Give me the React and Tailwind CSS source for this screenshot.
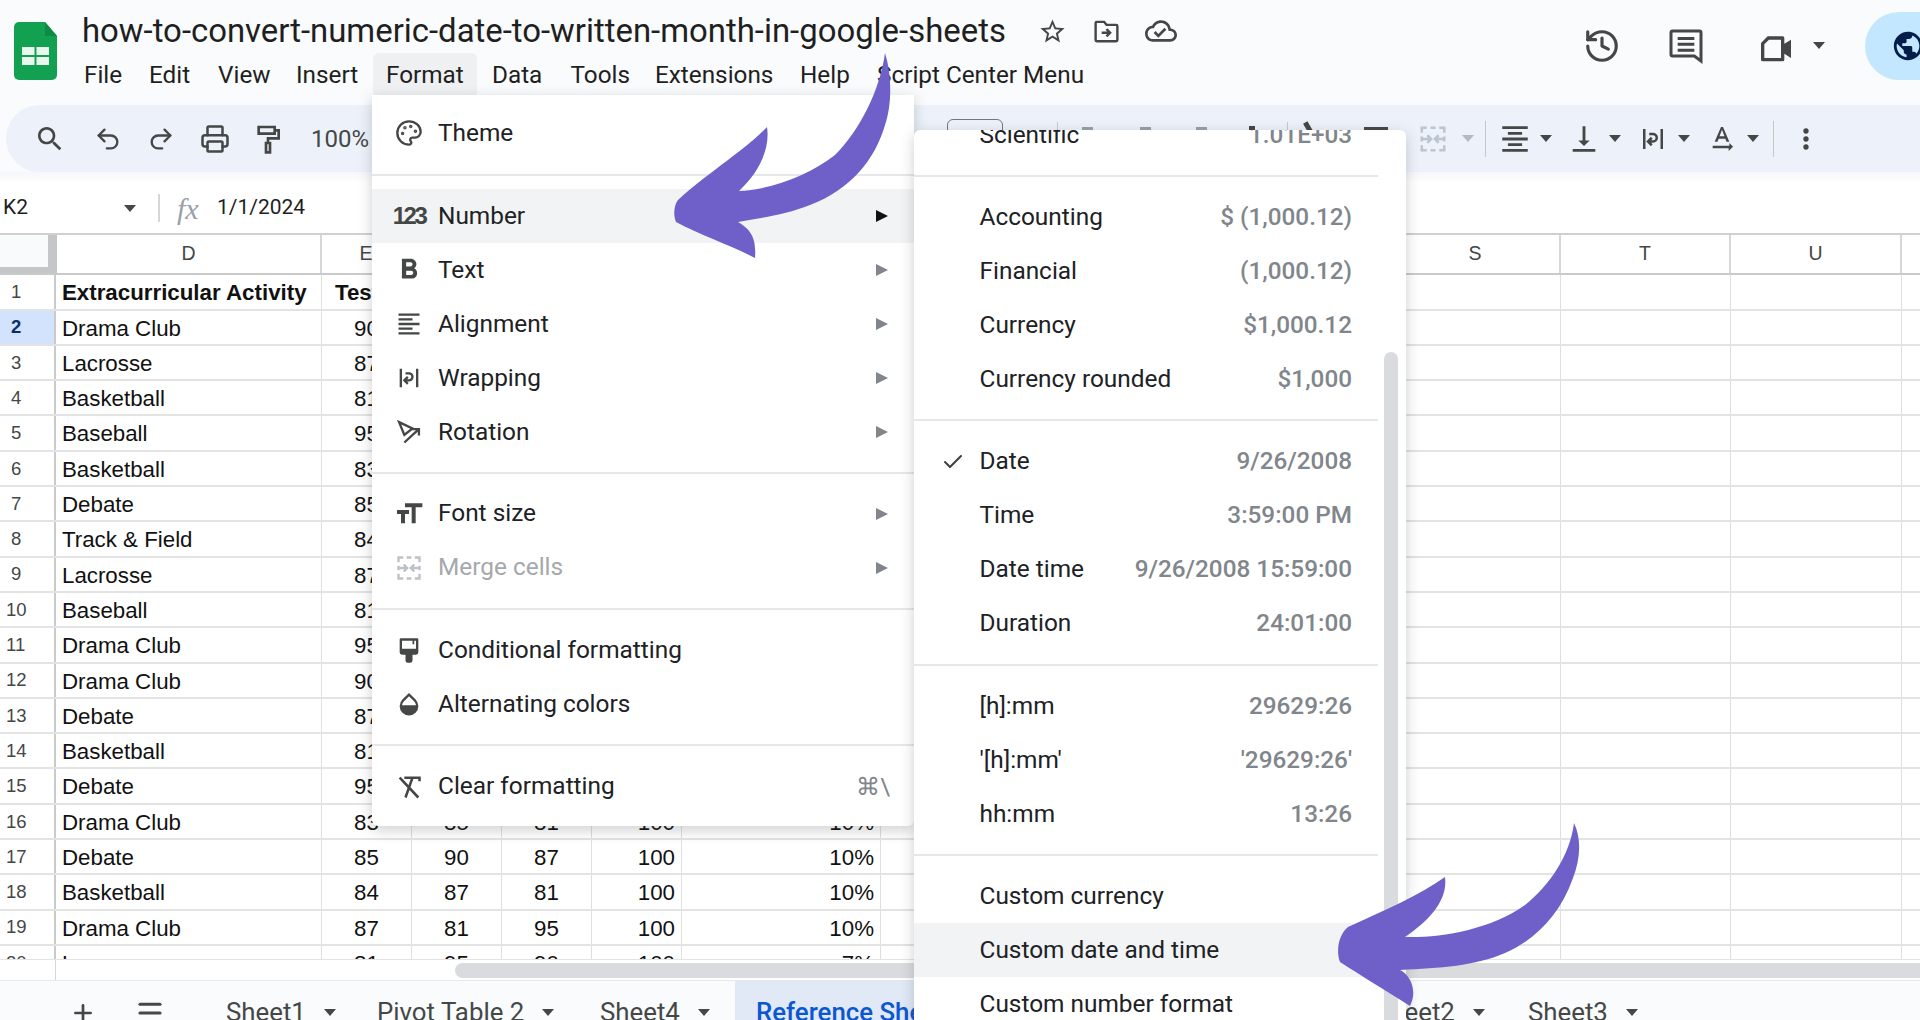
import { Check, History, Menu, Palette, Plus, Printer, Redo2, Undo2 } from "lucide-react";

const rows = [
  ["Drama Club", "90"], ["Lacrosse", "87"], ["Basketball", "81"], ["Baseball", "95"], ["Basketball", "83"],
  ["Debate", "85"], ["Track & Field", "84"], ["Lacrosse", "87"], ["Baseball", "81"], ["Drama Club", "95"],
  ["Drama Club", "90"], ["Debate", "87"], ["Basketball", "81"], ["Debate", "95"], ["Drama Club", "83", "85", "81", "100", "10%"],
  ["Debate", "85", "90", "87", "100", "10%"], ["Basketball", "84", "87", "81", "100", "10%"],
  ["Drama Club", "87", "81", "95", "100", "10%"], ["Lacrosse", "81", "95", "90", "100", "7%"],
];

const menuLinks = [
  ["File", "w-[65px]"], ["Edit", "w-[69px]"], ["View", "w-[78px]"], ["Insert", "w-[91px]"],
];
const menuLinksAfter = [
  ["Data", "w-[78.5px]"], ["Tools", "w-[84.5px]"], ["Extensions", "w-[145px]"], ["Help", "w-[77px]"], ["Script Center Menu", ""],
];

function Mat({ d, size = 28, color = "#444746" }) {
  return (
    <svg width={size} height={size} viewBox="0 0 24 24" fill={color}>
      <path d={d} />
    </svg>
  );
}

function Line({ d, size = 28, color = "#444746", width = 2 }) {
  return (
    <svg width={size} height={size} viewBox="0 0 24 24" fill="none" stroke={color} strokeWidth={width}>
      <path d={d} />
    </svg>
  );
}

const MERGE = "M3 7V3h4M17 3h4v4M3 17v4h4M17 21h4v-4M3 10v4M21 10v4M10 3h4M10 21h4M3 12h7M7.5 9l3 3-3 3M21 12h-7M16.5 9l-3 3 3 3";
const WRAP = "M5 4v16M19 4v16M9 8h3a3 3 0 0 1 0 6H8.5M11 11l-3 3 3 3";

function Caret({ color = "border-t-[#444746]" }) {
  return <span className={`block h-0 w-0 border-x-[6px] border-t-[7px] border-x-transparent ${color}`} />;
}

function Slot({ w, children }) {
  return <div className={`flex shrink-0 items-center justify-center ${w}`}>{children}</div>;
}

function ToolDrop({ children }) {
  return (
    <div className="mr-[7px] flex shrink-0 items-center">
      <Slot w="w-[44px]">{children}</Slot>
      <Slot w="w-[18px]"><Caret /></Slot>
    </div>
  );
}

function Divider({ h = "h-[28.5px]" }) {
  return (
    <div className={`flex items-center ${h}`}>
      <div className="h-[2px] w-full bg-[#e6e7e8]" />
    </div>
  );
}

function MainItem({ icon, label, arrow, active, disabled, hint }) {
  return (
    <div className={`flex h-[54px] items-center ${active ? "bg-[#f1f3f4]" : ""}`}>
      <div className="flex w-[66px] justify-center pl-[8px] text-[#444746]">{icon}</div>
      <span className={`text-[24.4px] ${disabled ? "text-[#a5a8ab]" : "text-[#202124]"}`}>{label}</span>
      {arrow && (
        <span className={`ml-auto mr-[26px] h-0 w-0 border-y-[6px] border-l-[12px] border-y-transparent ${active ? "border-l-[#111111]" : "border-l-[#80868b]"}`} />
      )}
      {hint && <span className="ml-auto mr-[24px] text-[24px] text-[#80868b]">{hint}</span>}
    </div>
  );
}

function FormatItem({ label, value, checked, active }) {
  return (
    <div className={`flex h-[54px] items-center pl-[65.5px] pr-[54px] ${active ? "bg-[#f1f3f4]" : ""}`}>
      {checked && (
        <span className="-ml-[39px] mr-[15px] text-[#3c4043]">
          <Check size={24} strokeWidth={2} />
        </span>
      )}
      <span className="text-[24.4px] text-[#202124]">{label}</span>
      {value && <span className="ml-auto text-[24.3px] font-medium text-[#80868b]">{value}</span>}
    </div>
  );
}

function SubDivider() {
  return (
    <div className="mr-[28px]">
      <Divider h="h-[28.3px]" />
    </div>
  );
}

function ColHead({ w, children }) {
  return (
    <div className={`flex shrink-0 items-center justify-center border-r-2 border-[#d5d6d6] text-[19.5px] text-[#444746] ${w}`}>
      {children}
    </div>
  );
}

function Cell({ w, align = "justify-center", bold, children }) {
  return (
    <div className={`flex shrink-0 items-center overflow-hidden whitespace-nowrap border-r border-[#dedfdf] pt-[2px] text-[22.3px] text-[#111111] ${w} ${align} ${bold ? "font-bold" : ""}`}>
      {children}
    </div>
  );
}

function SheetTab({ name, w }) {
  return (
    <div className={`flex shrink-0 items-center ${w}`}>
      <span className="text-[25.8px] text-[#444746]">{name}</span>
      <span className="ml-[18px]"><Caret /></span>
    </div>
  );
}

export default function App() {
  return (
    <div className="relative flex h-[1020px] w-[1920px] flex-col overflow-hidden bg-white font-['Roboto',sans-serif]">
      {/* ---- title bar ---- */}
      <div className="flex h-[105px] shrink-0 bg-[#f9fbfd]">
        <div className="ml-[14px] mt-[22px] shrink-0">
          <svg width="43" height="58" viewBox="0 0 43 58">
            <path d="M5 0h26l12 14v39a5 5 0 0 1-5 5H5a5 5 0 0 1-5-5V5a5 5 0 0 1 5-5z" fill="#12a150" />
            <path d="M31 0l12 14H31z" fill="#0d8a43" />
            <path d="M8 25h27v18H8z" fill="#e8f7ee" />
            <path d="M20.5 25h2v18h-2zM8 33h27v2H8z" fill="#12a150" />
          </svg>
        </div>
        <div className="ml-[25px] flex shrink-0 flex-col">
          <div className="mt-[10px] flex h-[42px] items-center">
            <span className="text-[32.9px] leading-none text-[#1f1f1f]">how-to-convert-numeric-date-to-written-month-in-google-sheets</span>
            <span className="ml-[32px]"><Mat size={29} d="M22 9.24l-7.19-.62L12 2 9.19 8.63 2 9.24l5.46 4.73L5.82 21 12 17.27 18.18 21l-1.63-7.03L22 9.24zM12 15.4l-3.76 2.27 1-4.28-3.32-2.88 4.38-.38L12 6.1l1.71 4.04 4.38.38-3.32 2.88 1 4.28L12 15.4z" /></span>
            <span className="ml-[25px]"><Line size={29} d="M4 4h6l2 2.5h8a1 1 0 0 1 1 1V19a1 1 0 0 1-1 1H4a1 1 0 0 1-1-1V5a1 1 0 0 1 1-1zM8 13h7M12 10l3 3-3 3" /></span>
            <span className="ml-[24px]"><Mat size={32} d="M19.35 10.04C18.67 6.59 15.64 4 12 4 9.11 4 6.6 5.64 5.35 8.04 2.34 8.36 0 10.91 0 14c0 3.31 2.69 6 6 6h13c2.76 0 5-2.24 5-5 0-2.64-2.05-4.78-4.65-4.96zM19 18H6c-2.21 0-4-1.79-4-4 0-2.05 1.53-3.76 3.56-3.97l1.07-.11.5-.95C8.08 7.14 9.94 6 12 6c2.62 0 4.88 1.86 5.39 4.43l.3 1.5 1.53.11c1.56.1 2.78 1.41 2.78 2.96 0 1.65-1.35 3-3 3zm-9-3.82l-2.09-2.09L6.5 13.5 10 17l6.01-6.01-1.41-1.41z" /></span>
          </div>
          <div className="mt-[1px] flex h-[42px] items-center pl-[2px] pt-[2px] text-[24.3px] text-[#1f1f1f]">
            {menuLinks.map(([name, w]) => (
              <span key={name} className={`shrink-0 whitespace-nowrap ${w}`}>{name}</span>
            ))}
            <span className="-ml-[14px] -mt-[2px] mr-[15px] flex h-[42px] w-[104px] shrink-0 items-center rounded-t-md bg-[#eef0f2] pl-[13px] pt-[2px]">Format</span>
            {menuLinksAfter.map(([name, w]) => (
              <span key={name} className={`shrink-0 whitespace-nowrap ${w}`}>{name}</span>
            ))}
          </div>
        </div>
        <div className="ml-auto flex h-[92px] items-center">
          <span><History size={38} strokeWidth={2} color="#444746" /></span>
          <span className="ml-[45px]"><Line size={40} width={1.8} d="M4 3h16a1 1 0 0 1 1 1v17l-4-3H4a1 1 0 0 1-1-1V4a1 1 0 0 1 1-1zM7 7.5h10M7 11h10M7 14.5h10" /></span>
          <span className="ml-[50px] mt-[4px]"><Mat size={40} d="M7 5h9a1 1 0 0 1 1 1v3.5L21 7v11l-4-2.5V19a1 1 0 0 1-1 1H4a1 1 0 0 1-1-1V9zm.8 2L5 9.8V18h10V7z" /></span>
          <span className="ml-[17px] flex -mt-[2px]"><Caret /></span>
          <div className="ml-[40px] flex h-[68px] w-[55px] items-center rounded-l-[34px] bg-[#c2e7ff] pl-[26px]">
            <span className="shrink-0"><Mat size={34} color="#041e49" d="M12 2C6.48 2 2 6.48 2 12s4.48 10 10 10 10-4.48 10-10S17.52 2 12 2zm-1 17.93c-3.95-.49-7-3.85-7-7.93 0-.62.08-1.21.21-1.79L9 15v1c0 1.1.9 2 2 2v1.93zm6.9-2.54c-.26-.81-1-1.39-1.9-1.39h-1v-3c0-.55-.45-1-1-1H8v-2h2c.55 0 1-.45 1-1V7h2c1.1 0 2-.9 2-2v-.41c2.93 1.19 5 4.06 5 7.41 0 2.08-.8 3.97-2.1 5.39z" /></span>
          </div>
        </div>
      </div>

      {/* ---- toolbar ---- */}
      <div className="h-[67px] shrink-0 bg-[#f9fbfd] pl-[6px]">
        <div className="flex h-[67px] items-center rounded-l-[34px] bg-[#edf2fa] pl-[15px]">
          <Slot w="w-[58px]"><Mat size={32} d="M15.5 14h-.79l-.28-.27C15.41 12.59 16 11.11 16 9.5 16 5.91 13.09 3 9.5 3S3 5.91 3 9.5 5.91 16 9.5 16c1.61 0 3.09-.59 4.23-1.57l.27.28v.79l5 4.99L20.49 19l-4.99-5zm-6 0C7.01 14 5 11.99 5 9.5S7.01 5 9.5 5 14 7.01 14 9.5 11.99 14 9.5 14z" /></Slot>
          <Slot w="w-[58px]"><Undo2 size={28} strokeWidth={2} color="#444746" /></Slot>
          <Slot w="w-[48px]"><Redo2 size={28} strokeWidth={2} color="#444746" /></Slot>
          <Slot w="w-[60px]"><Printer size={30} strokeWidth={2} color="#444746" /></Slot>
          <Slot w="w-[46px]"><Line size={32} d="M5 3h12v5H5zM17 5.5h3v6h-8v3.5M10.5 15h3v7h-3z" /></Slot>
          <span className="ml-[20px] w-[636px] shrink-0 text-[24px] text-[#444746]">100%</span>
          <div className="h-[39px] w-[56px] shrink-0 rounded-md border border-[#747775]" />
          <div className="ml-[54px] h-[34px] w-px shrink-0 bg-[#c7c7c7]" />
          <div className="ml-[24px] h-[23px] w-[11px] shrink-0 bg-[#9aa0a6]" />
          <div className="ml-[47px] h-[23px] w-[11px] shrink-0 bg-[#9aa0a6]" />
          <div className="ml-[45px] h-[23px] w-[11px] shrink-0 bg-[#9aa0a6]" />
          <div className="ml-[42px] h-[25px] w-[6px] shrink-0 bg-[#444746]" />
          <div className="ml-[32px] h-[34px] w-px shrink-0 bg-[#c7c7c7]" />
          <div className="ml-[24px] h-[37px] w-[5px] shrink-0 -rotate-30 bg-[#444746]" />
          <div className="ml-[47px] h-[23px] w-[24px] shrink-0 bg-[#444746]" />
          <Slot w="ml-[23px] w-[44px]"><Line size={30} color="#bdc4cf" d={MERGE} /></Slot>
          <Slot w="w-[26px]"><Caret color="border-t-[#b6bac0]" /></Slot>
          <Slot w="w-[8px]"><span className="h-[36px] w-px bg-[#c7c7c7]" /></Slot>
          <div className="ml-[4px]" />
          <ToolDrop><Mat size={34} d="M7 15v2h10v-2H7zm-4 6h18v-2H3v2zm0-8h18v-2H3v2zm4-6v2h10V7H7zM3 3v2h18V3H3z" /></ToolDrop>
          <ToolDrop><Mat size={34} d="M16 13h-3V3h-2v10H8l4 4 4-4zM4 19v2h16v-2H4z" /></ToolDrop>
          <ToolDrop><Line size={30} d={WRAP} /></ToolDrop>
          <div className="-mr-[7px]"><ToolDrop><Mat size={32} d="M12.75 3h-1.5L6.5 14h2.1l.9-2.2h5l.9 2.2h2.1L12.75 3zm-2.62 7L12 4.98 13.87 10h-3.74zm10.37 8l-3-3v2H5v2h12v2l3-3z" /></ToolDrop></div>
          <Slot w="w-[22px]"><span className="h-[36px] w-px bg-[#c7c7c7]" /></Slot>
          <Slot w="w-[44px]"><Mat size={32} d="M12 8a2 2 0 1 0 0-4 2 2 0 0 0 0 4zm0 2a2 2 0 1 0 0 4 2 2 0 0 0 0-4zm0 6a2 2 0 1 0 0 4 2 2 0 0 0 0-4z" /></Slot>
        </div>
      </div>

      {/* ---- formula bar ---- */}
      <div className="flex h-[61px] shrink-0 items-center bg-gradient-to-b from-[#f5f7fb] from-0% to-white to-[18%] pl-[3px] pt-[11px]">
        <span className="w-[121px] text-[21px] text-[#1f1f1f]">K2</span>
        <Caret />
        <span className="ml-[22px] h-[28px] w-[2px] bg-[#d5d7da]" />
        <span className="ml-[17px] w-[40px] font-['Liberation_Serif',serif] text-[30px] italic text-[#9aa0a6]">fx</span>
        <span className="text-[21px] text-[#1f1f1f]">1/1/2024</span>
      </div>

      {/* ---- grid ---- */}
      <div className="h-[726px] shrink-0 overflow-hidden border-t-2 border-[#cfd0d0] font-['Liberation_Sans',sans-serif]">
        <div className="flex h-[40px] border-b-2 border-[#c9caca]">
          <div className="h-[38px] w-[48px] shrink-0 border-b-[6px] border-[#c4c6c7] bg-[#f9fafb]" />
          <div className="h-[38px] w-[9px] shrink-0 bg-[#c4c6c7]" />
          <ColHead w="w-[265px]">D</ColHead>
          <ColHead w="w-[90px]">E</ColHead>
          <ColHead w="w-[90px]">F</ColHead>
          <ColHead w="w-[90px]">G</ColHead>
          <ColHead w="w-[90px]">H</ColHead>
          <ColHead w="w-[199px]">I</ColHead>
          <ColHead w="w-[510px]" />
          <ColHead w="w-[170px]">S</ColHead>
          <ColHead w="w-[170px]">T</ColHead>
          <ColHead w="w-[171px]">U</ColHead>
        </div>
        <div className="flex h-[35.6px] border-b-2 border-[#e3e3e3]">
          <div className="flex w-[56px] shrink-0 items-center border-r-2 border-[#c9caca] pl-[11px] text-[18.5px] text-[#444746]">1</div>
          <Cell w="w-[266px]" align="justify-start pl-[6px]" bold>Extracurricular Activity</Cell>
          <Cell w="w-[90px]" align="justify-start pl-[13px]" bold>Test 1</Cell>
          <Cell w="w-[90px]" />
          <Cell w="w-[90px]" />
          <Cell w="w-[90px]" />
          <Cell w="w-[199px]" />
          <Cell w="w-[510px]" />
          <Cell w="w-[170px]" />
          <Cell w="w-[170px]" />
          <Cell w="w-[171px]" />
        </div>
        {rows.map((r, i) => (
          <div key={i} className="flex h-[35.3px] border-b-2 border-[#e3e3e3]">
            <div className={`flex w-[56px] shrink-0 items-center border-r-2 border-[#c9caca] text-[18.5px] ${i === 0 ? "bg-[#d3e3fd] pl-[11px] font-bold text-[#0b2e6b]" : "text-[#444746]"} ${i > 7 ? "pl-[6px]" : "pl-[11px]"}`}>{i + 2}</div>
            <Cell w="w-[266px]" align="justify-start pl-[6px]">{r[0]}</Cell>
            <Cell w="w-[90px]">{r[1]}</Cell>
            <Cell w="w-[90px]">{r[2]}</Cell>
            <Cell w="w-[90px]">{r[3]}</Cell>
            <Cell w="w-[90px]" align="justify-end pr-[6px]">{r[4]}</Cell>
            <Cell w="w-[199px]" align="justify-end pr-[6px]">{r[5]}</Cell>
            <Cell w="w-[510px]" />
            <Cell w="w-[170px]" />
            <Cell w="w-[170px]" />
            <Cell w="w-[171px]" />
          </div>
        ))}
      </div>

      {/* ---- horizontal scrollbar ---- */}
      <div className="flex h-[21px] shrink-0 items-center border-t border-[#e3e3e3] bg-white">
        <div className="h-full w-[56px] border-r border-[#d5d6d6]" />
        <div className="ml-[399px] h-[15px] flex-1 rounded-l-full bg-[#d9dbde]" />
      </div>

      {/* ---- sheet tabs ---- */}
      <div className="flex h-[40px] shrink-0 items-center overflow-hidden border-t border-[#e6e8ea] bg-[#f9fbfd] pt-[24px]">
        <span className="ml-[70px] shrink-0"><Plus size={26} strokeWidth={2.5} color="#444746" /></span>
        <span className="ml-[39px] shrink-0"><Menu size={30} strokeWidth={2.5} color="#444746" /></span>
        <span className="w-[61px] shrink-0" />
        <SheetTab name="Sheet1" w="w-[151px]" />
        <SheetTab name="Pivot Table 2" w="w-[223px]" />
        <SheetTab name="Sheet4" w="w-[135px]" />
        <div className="-mt-[24px] flex h-[40px] w-[640px] shrink-0 items-center bg-[#e1e9f7] pl-[21px] pt-[24px]">
          <span className="text-[25.8px] font-medium text-[#0b57d0]">Reference Sheet</span>
        </div>
        <SheetTab name="Sheet2" w="w-[153px]" />
        <SheetTab name="Sheet3" w="w-[151px]" />
      </div>

      {/* ---- format menu ---- */}
      <div className="absolute left-[372px] top-[95px] h-[731px] w-[542px] rounded-b-md bg-white pt-[11px] shadow-[0_4px_14px_rgba(60,64,67,0.25)]">
        <MainItem label="Theme" icon={<Palette size={28} strokeWidth={2} />} />
        <Divider h="h-[29px]" />
        <MainItem active arrow label="Number" icon={<span className="font-['Liberation_Sans',sans-serif] text-[24px] font-bold tracking-[-2.5px]">123</span>} />
        <MainItem arrow label="Text" icon={<Mat size={34} d="M15.6 10.79c.97-.67 1.65-1.77 1.65-2.79 0-2.26-1.75-4-4-4H7v14h7.04c2.09 0 3.71-1.7 3.71-3.79 0-1.52-.86-2.82-2.15-3.42zM10 6.5h3c.83 0 1.5.67 1.5 1.5s-.67 1.5-1.5 1.5h-3v-3zm3.5 9H10v-3h3.5c.83 0 1.5.67 1.5 1.5s-.67 1.5-1.5 1.5z" />} />
        <MainItem arrow label="Alignment" icon={<Mat d="M15 15H3v2h12v-2zm0-8H3v2h12V7zM3 13h18v-2H3v2zm0 8h18v-2H3v2zM3 3v2h18V3H3z" />} />
        <MainItem arrow label="Wrapping" icon={<Line d={WRAP} />} />
        <MainItem arrow label="Rotation" icon={<Line d="M3.5 3.5L15 9l-7 5.5zM8 21l12-11M14.5 9.5H20.5V15" />} />
        <Divider h="h-[27.5px]" />
        <MainItem arrow label="Font size" icon={<Mat size={32} d="M9 4v3h5v12h3V7h5V4H9zm-6 8h3v7h3v-7h3V9H3v3z" />} />
        <MainItem arrow disabled label="Merge cells" icon={<Line color="#bdc1c6" d={MERGE} />} />
        <Divider />
        <MainItem label="Conditional formatting" icon={<Mat d="M5 2h14a1 1 0 0 1 1 1v11a2 2 0 0 1-2 2h-3v5a2 2 0 0 1-2 2h-2a2 2 0 0 1-2-2v-5H6a2 2 0 0 1-2-2V3a1 1 0 0 1 1-1zM6 4v7h12V4h-1.5v3H15V4z" />} />
        <MainItem label="Alternating colors" icon={<Mat d="M12 2.5L6.3 8.2a8 8 0 1 0 11.4 0L12 2.5zM7.7 9.6L12 5.3l4.3 4.3A6 6 0 0 1 18 13H6a6 6 0 0 1 1.7-3.4z" />} />
        <Divider />
        <MainItem label="Clear formatting" hint="⌘\" icon={<Line width={2.2} d="M8 4h13v3M15 4L9 21M4 4l16 17" />} />
      </div>

      {/* ---- number format submenu ---- */}
      <div className="absolute left-[914px] top-[130px] h-[890px] w-[492px] overflow-hidden rounded-t-md bg-white shadow-[0_4px_14px_rgba(60,64,67,0.25)]">
        <div className="-mt-[22px]">
          <FormatItem label="Scientific" value="1.01E+03" />
          <SubDivider />
          <FormatItem label="Accounting" value="$ (1,000.12)" />
          <FormatItem label="Financial" value="(1,000.12)" />
          <FormatItem label="Currency" value="$1,000.12" />
          <FormatItem label="Currency rounded" value="$1,000" />
          <SubDivider />
          <FormatItem checked label="Date" value="9/26/2008" />
          <FormatItem label="Time" value="3:59:00 PM" />
          <FormatItem label="Date time" value="9/26/2008 15:59:00" />
          <FormatItem label="Duration" value="24:01:00" />
          <SubDivider />
          <FormatItem label="[h]:mm" value="29629:26" />
          <FormatItem label="'[h]:mm'" value="'29629:26'" />
          <FormatItem label="hh:mm" value="13:26" />
          <SubDivider />
          <FormatItem label="Custom currency" />
          <FormatItem active label="Custom date and time" />
          <FormatItem label="Custom number format" />
        </div>
        <div className="absolute left-[470px] top-[222px] h-[668px] w-[14px] rounded-t-full bg-[#d9dbde]" />
      </div>

      {/* ---- purple annotation arrows ---- */}
      <svg className="absolute left-[660px] top-[40px]" width="240" height="230" viewBox="660 40 240 230">
        <path fill="#6e60c8" d="M885 53C892 75 892 105 885 125C875 160 850 190 810 205C785 215 760 218 738 222C748 228 757 235 755 258C730 245 700 235 676 222C673 215 674 205 678 200C705 175 745 150 767 127C770 145 762 170 739 191C770 190 810 175 835 155C860 130 880 90 885 53Z" />
      </svg>
      <svg className="absolute left-[1330px] top-[815px]" width="260" height="200" viewBox="1330 815 260 200">
        <path fill="#6e60c8" d="M1574 823C1582 840 1580 860 1573 878C1560 915 1535 940 1505 953C1475 966 1440 968 1400 970C1410 975 1418 990 1410 1006C1385 990 1360 975 1340 962C1336 952 1338 935 1348 927C1385 910 1420 895 1445 877C1448 900 1430 920 1405 937C1440 938 1490 930 1525 905C1550 885 1570 855 1574 823Z" />
      </svg>
    </div>
  );
}
